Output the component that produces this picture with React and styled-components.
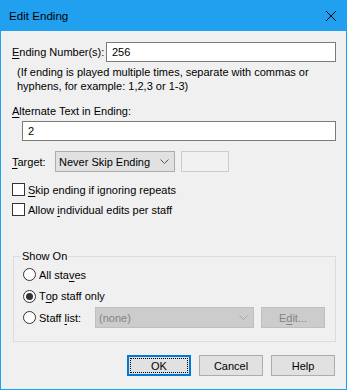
import React from "react";
import styled, { createGlobalStyle } from "styled-components";

const GlobalStyle = createGlobalStyle`
  html, body {
    margin: 0;
    padding: 0;
    background: #f0f0f0;
  }
  * {
    box-sizing: border-box;
  }
`;

const Window = styled.div`
  width: 347px;
  height: 390px;
  display: flex;
  flex-direction: column;
  border: 1px solid #22a0f0;
  border-top: none;
  background: #f0f0f0;
  font-family: "Liberation Sans", Arial, sans-serif;
  font-size: 11px;
  line-height: 14px;
  color: #000;
`;

const TitleBar = styled.div`
  height: 31px;
  flex: none;
  display: flex;
  align-items: center;
  padding: 0 10px 0 8px;
  background: #22a0f0;
`;

const Title = styled.div`
  font-size: 11.6px;
  flex: 1;
  padding-top: 1px;
`;

const CloseIcon = styled.svg`
  width: 10px;
  height: 10px;
  display: block;
`;

const Body = styled.div`
  flex: 1;
  display: flex;
  flex-direction: column;
  padding: 11px 10px 0 11px;
`;

const Row = styled.div`
  display: flex;
  align-items: center;
  margin-top: ${(p) => p.$mt || 0}px;
`;

const Label = styled.span`
  width: ${(p) => (p.$w ? `${p.$w}px` : "auto")};
  flex: none;
  white-space: nowrap;
`;

const Key = styled.span`
  text-decoration: underline;
  text-underline-offset: 2px;
`;

const TextField = styled.div`
  height: ${(p) => p.$h}px;
  width: ${(p) => p.$w}px;
  margin-left: ${(p) => (p.$auto ? "auto" : `${p.$ml || 0}px`)};
  margin-top: ${(p) => p.$mt || 0}px;
  flex: none;
  display: flex;
  align-items: center;
  padding-left: 5px;
  background: #fff;
  border: 1px solid #7a7a7a;
`;

const Help = styled.div`
  margin-top: 3px;
  padding-left: 5px;
`;

const Select = styled.div`
  width: ${(p) => p.$w}px;
  height: 21px;
  flex: none;
  display: flex;
  align-items: center;
  justify-content: space-between;
  padding: 0 5px 0 3px;
  background: ${(p) => (p.$disabled ? "#cccccc" : "#e1e1e1")};
  border: 1px solid ${(p) => (p.$disabled ? "#bfbfbf" : "#adadad")};
  color: ${(p) => (p.$disabled ? "#838383" : "#000")};
`;

const Chevron = styled.svg`
  width: 9px;
  height: 5px;
  display: block;
`;

const Blank = styled.div`
  width: 48px;
  height: 21px;
  margin-left: 6px;
  border: 1px solid #cccccc;
  background: #f0f0f0;
`;

const CheckRow = styled.label`
  display: flex;
  align-items: center;
  height: 13px;
  margin-top: ${(p) => p.$mt}px;
  gap: 3px;
`;

const Box = styled.span`
  width: 13px;
  height: 13px;
  flex: none;
  border: 1px solid #333;
  background: #fff;
`;

const Group = styled.fieldset`
  margin: 33px 0 0 1px;
  padding: 1px 10px 0 9px;
  height: 93px;
  border: 1px solid #dcdcdc;
  min-width: 0;
`;

const Legend = styled.legend`
  padding: 0 1px;
  margin-left: -2px;
  line-height: 14px;
`;

const Radios = styled.div`
  display: flex;
  flex-direction: column;
`;

const RadioRow = styled.div`
  height: 21.5px;
  display: flex;
  align-items: center;
`;

const Radio = styled.span`
  width: 13px;
  height: 13px;
  flex: none;
  border-radius: 50%;
  border: 1px solid #333;
  background: #fff;
  display: flex;
  align-items: center;
  justify-content: center;
  margin-right: 3px;
  &::after {
    content: "";
    width: 7px;
    height: 7px;
    border-radius: 50%;
    background: ${(p) => (p.$on ? "#333" : "transparent")};
  }
`;

const Button = styled.div`
  width: 64px;
  height: 21px;
  flex: none;
  display: flex;
  align-items: center;
  justify-content: center;
  background: ${(p) => (p.$disabled ? "#cccccc" : "#e1e1e1")};
  border: ${(p) => (p.$default ? "2px solid #0078d7" : p.$disabled ? "1px solid #bfbfbf" : "1px solid #adadad")};
  color: ${(p) => (p.$disabled ? "#838383" : "#000")};
  outline: ${(p) => (p.$default ? "1px dotted #000" : "none")};
  outline-offset: -4px;
  margin-left: ${(p) => p.$ml || 0}px;
`;

const Buttons = styled.div`
  display: flex;
  justify-content: flex-end;
  gap: 8px;
  margin-top: 13px;
  padding-right: 1px;
`;

function DropArrow({ color }) {
  return (
    <Chevron viewBox="0 0 9 5">
      <path d="M0.5 0.5 L4.5 4.5 L8.5 0.5" fill="none" stroke={color} strokeWidth="1" />
    </Chevron>
  );
}

export default function App() {
  return (
    <>
      <GlobalStyle />
      <Window>
        <TitleBar>
          <Title>Edit Ending</Title>
          <CloseIcon viewBox="0 0 10 10">
            <path d="M0 0 L10 10 M10 0 L0 10" stroke="#000" strokeWidth="1" />
          </CloseIcon>
        </TitleBar>
        <Body>
          <Row>
            <Label>
              <Key>E</Key>nding Number(s):
            </Label>
            <TextField $w={230} $h={20} $auto>
              256
            </TextField>
          </Row>
          <Help>
            (If ending is played multiple times, separate with commas or
            <br />
            hyphens, for example: 1,2,3 or 1-3)
          </Help>
          <Row $mt={11}>
            <Label>
              <Key>A</Key>lternate Text in Ending:
            </Label>
          </Row>
          <TextField $w={314} $h={20} $ml={10} $mt={3}>
            2
          </TextField>
          <Row $mt={10}>
            <Label $w={43}>
              <Key>T</Key>arget:
            </Label>
            <Select $w={120}>
              Never Skip Ending
              <DropArrow color="#555" />
            </Select>
            <Blank />
          </Row>
          <CheckRow $mt={11}>
            <Box />
            <span>
              <Key>S</Key>kip ending if ignoring repeats
            </span>
          </CheckRow>
          <CheckRow $mt={7}>
            <Box />
            <span>
              Allow <Key>i</Key>ndividual edits per staff
            </span>
          </CheckRow>
          <Group>
            <Legend>Show On</Legend>
            <Radios>
              <RadioRow>
                <Radio />
                All sta<Key>v</Key>es
              </RadioRow>
              <RadioRow>
                <Radio $on />
                T<Key>o</Key>p staff only
              </RadioRow>
              <RadioRow>
                <Radio />
                <Label $w={56}>
                  Staff <Key>l</Key>ist:
                </Label>
                <Select $w={159} $disabled>
                  (none)
                  <DropArrow color="#a6a6a6" />
                </Select>
                <Button $disabled $ml={7}>
                  E<Key>d</Key>it...
                </Button>
              </RadioRow>
            </Radios>
          </Group>
          <Buttons>
            <Button $default>OK</Button>
            <Button>Cancel</Button>
            <Button>Help</Button>
          </Buttons>
        </Body>
      </Window>
    </>
  );
}
